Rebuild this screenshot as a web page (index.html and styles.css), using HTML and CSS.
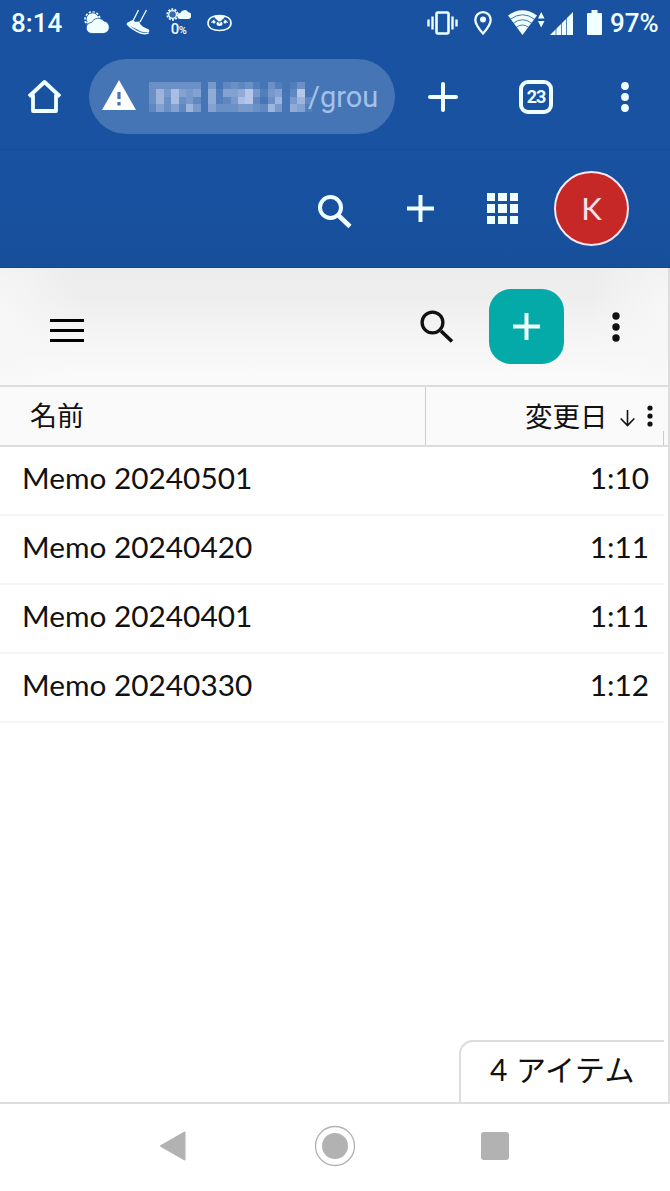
FILE: index.html
```html
<!DOCTYPE html>
<html lang="ja">
<head>
    <meta charset="UTF-8">
    <meta name="viewport" content="width=device-width, initial-scale=1.0">
    <title>Memo</title>
    <link rel="stylesheet" href="styles.css">
</head>
<body>
    <div class="status-bar">
        <span class="clock">8:14</span>
        <svg class="st-weather" width="26" height="24" viewBox="0 0 26 24">
            <circle cx="8.500" cy="8.500" r="7.300" fill="none" stroke="#f0ffff" stroke-width="2" stroke-dasharray="2.300 1.500"/>
            <circle cx="8.500" cy="8.500" r="6.500" fill="#f0ffff"/>
            <path d="M3 11a6 6 0 0 1 11-6" fill="none" stroke="#1852a1" stroke-width=".8"/>
            <path d="M8 22.500a5.500 5.500 0 0 1-.5-11A7.500 7.500 0 0 1 20 10a6.300 6.300 0 0 1-.5 12.500z" fill="#f0ffff" stroke="#1852a1" stroke-width=".8"/>
        </svg>
        <svg class="st-shoe" width="24" height="26" viewBox="0 0 24 26">
            <path d="M7 12L12.500 1M14 13L20.500 1" fill="none" stroke="#f0ffff" stroke-width="1.300"/>
            <path d="M.8 14L6.500 11c1.500 1.800 4 2.300 6.800 1.200.5 3.800 3.500 5.800 8.700 7.800 1.500.8 1.700 2 1 3-3.500.8-7.500.2-10.500-1.800C8 18.500 3.500 17.500.8 14z" fill="#f0ffff"/>
            <path d="M1 14.500c2.500 4 7 6 10.500 8.200 3 2 7.500 2.300 11.200 1.300" fill="none" stroke="#f0ffff" stroke-width="1.500"/>
        </svg>
        <div class="rain">
            <svg width="25" height="13" viewBox="0 0 25 13">
                <circle cx="6.500" cy="6.500" r="5.300" fill="none" stroke="#f0ffff" stroke-width="1.700" stroke-dasharray="2 1.300"/>
                <circle cx="6.500" cy="6.500" r="3.900" fill="#3a6bb0" stroke="#f0ffff" stroke-width="1.300"/>
                <path d="M14.500 11a3 3 0 0 1-.2-6 4.500 4.500 0 0 1 8-.8 3.400 3.400 0 0 1-.8 6.800z" fill="#f0ffff"/>
            </svg>
            <span>0<small>%</small></span>
        </div>
        <svg class="st-face" width="25" height="18" viewBox="0 0 25 18">
            <path d="M12.500 1.500C19 1.500 24 4 24 9s-5 7.500-11.500 7.500S1 14 1 9s5-7.500 11.500-7.500z" fill="none" stroke="#f0ffff" stroke-width="1.600"/>
            <path d="M7 2.500c3.500-1.300 7.500-1.300 11 0-1 2.200-3 3-4 4.500h-3C10 5.500 8 4.700 7 2.500z" fill="#f0ffff"/>
            <path d="M4.500 9q.5-2.500 3-3M20.500 9q-.5-2.500-3-3" fill="none" stroke="#f0ffff" stroke-width="1"/>
            <circle cx="7" cy="8" r="1.500" fill="#f0ffff"/>
            <circle cx="18" cy="8" r="1.500" fill="#f0ffff"/>
            <ellipse cx="12.500" cy="9.800" rx="3" ry="2.200" fill="#f0ffff"/>
            <path d="M11 8.200h3l-1.500 1.500z" fill="#1852a1"/>
        </svg>
        <svg class="st-vibrate" width="31" height="24" viewBox="0 0 31 24">
            <rect x="9.500" y="1.500" width="12" height="21" rx="1.500" fill="none" stroke="#f0ffff" stroke-width="2.600"/>
            <path d="M5.500 5.500v13M1.500 8.500v7M25.500 5.500v13M29.500 8.500v7" stroke="#f0ffff" stroke-width="2.400"/>
        </svg>
        <svg class="st-pin" width="18" height="24" viewBox="0 0 18 24">
            <path d="M9 1.200c-4.300 0-7.700 3.300-7.700 7.500C1.300 14 9 22.500 9 22.500s7.700-8.500 7.700-13.800C16.700 4.500 13.300 1.200 9 1.200z" fill="none" stroke="#f0ffff" stroke-width="2.300"/>
            <circle cx="9" cy="8.500" r="3" fill="#f0ffff"/>
        </svg>
        <svg class="st-wifi" width="37" height="25" viewBox="0 0 37 25">
            <path d="M0 5.500Q14.500-5 29 5.500L14.500 25z" fill="#f0ffff"/>
            <path d="M2 9.500q12.500-9.500 25 0M5 13.500q9.500-7.500 19 0M8 17.500q6.500-5 13 0" fill="none" stroke="#1852a1" stroke-width=".8"/>
            <path d="M30 8.500L33.200 2l3.300 6.500zM30 11l3.200 6.500L36.500 11z" fill="#f0ffff"/>
        </svg>
        <svg class="st-signal" width="23" height="23" viewBox="0 0 23 23">
            <path d="M0 23L23 0v23z" fill="#f0ffff"/>
            <path d="M6 16v7M11.500 10v13M16.500 5v18" stroke="#1852a1" stroke-width=".7"/>
        </svg>
        <svg class="st-battery" width="15" height="25" viewBox="0 0 15 25">
            <path d="M4.500 0h6v3h3.500q1 0 1 1v20q0 1-1 1H1q-1 0-1-1V4q0-1 1-1h3.500z" fill="#f0ffff"/>
        </svg>
        <span class="percent">97%</span>
    </div>

    <div class="browser-bar">
        <svg class="home" width="35" height="35" viewBox="0 0 35 35">
            <path d="M2 17.500L17.500 3 33 17.500M6 15.500v16.500h23V15.500" fill="none" stroke="#f0ffff" stroke-width="3.800" stroke-linejoin="round"/>
        </svg>
        <div class="url">
            <svg width="34" height="30" viewBox="0 0 34 30">
                <path d="M17 0l17 30H0z" fill="#fff"/>
                <path d="M17 12v7M17 22v3.500" stroke="#4675b6" stroke-width="3.200"/>
            </svg>
            <div class="mosaic" id="mosaic"></div>
            <span>/grou</span>
        </div>
        <svg class="new-tab" width="30" height="30" viewBox="0 0 30 30">
            <path d="M15 2v26M2 15h26" stroke="#f0ffff" stroke-width="4" stroke-linecap="round"/>
        </svg>
        <div class="tabs">23</div>
        <svg class="browser-menu" width="8" height="32" viewBox="0 0 8 32">
            <g fill="#f0ffff"><circle cx="4" cy="5" r="3.900"/><circle cx="4" cy="16" r="3.900"/><circle cx="4" cy="27" r="3.900"/></g>
        </svg>
    </div>

    <header class="app-header">
        <svg class="h-search" width="34" height="34" viewBox="0 0 34 34">
            <circle cx="12.500" cy="12.500" r="10.500" fill="none" stroke="#f0ffff" stroke-width="4"/>
            <path d="M20.500 20.500l11.500 11" stroke="#f0ffff" stroke-width="4.500"/>
        </svg>
        <svg class="h-plus" width="27" height="27" viewBox="0 0 27 27">
            <path d="M13.500 0v27M0 13.500h27" stroke="#f0ffff" stroke-width="4"/>
        </svg>
        <div class="apps"><i></i><i></i><i></i><i></i><i></i><i></i><i></i><i></i><i></i></div>
        <div class="avatar">K</div>
    </header>

    <main>
        <div class="toolbar">
            <div class="burger"><i></i><i></i><i></i></div>
            <svg class="t-search" width="34" height="34" viewBox="0 0 34 34">
                <circle cx="12.500" cy="12.500" r="10.400" fill="none" stroke="#111" stroke-width="3.300"/>
                <path d="M21 21l11 10.500" stroke="#111" stroke-width="3.800"/>
            </svg>
            <div class="add-btn">
                <svg width="27" height="27" viewBox="0 0 27 27">
                    <path d="M13.500 0v27M0 13.500h27" stroke="#f0ffff" stroke-width="4"/>
                </svg>
            </div>
            <svg class="t-menu" width="8" height="32" viewBox="0 0 8 32">
                <g fill="#111"><circle cx="4" cy="5" r="3.700"/><circle cx="4" cy="16" r="3.700"/><circle cx="4" cy="27" r="3.700"/></g>
            </svg>
        </div>

        <div class="list-head">
            <div class="col-name">名前</div>
            <div class="col-date">
                <span>変更日</span>
                <svg class="arrow" width="15" height="17" viewBox="0 0 15 17">
                    <path d="M7.500 0v15.500M.7 8.500l6.800 7 6.800-7" fill="none" stroke="#111" stroke-width="1.600"/>
                </svg>
                <svg class="col-menu" width="6" height="22" viewBox="0 0 6 22">
                    <g fill="#111"><circle cx="3" cy="3" r="2.600"/><circle cx="3" cy="11" r="2.600"/><circle cx="3" cy="19" r="2.600"/></g>
                </svg>
            </div>
            <div class="grip"></div>
        </div>

        <div class="list">
            <div class="row"><span>Memo 20240501</span><span>1:10</span></div>
            <div class="row"><span>Memo 20240420</span><span>1:11</span></div>
            <div class="row"><span>Memo 20240401</span><span>1:11</span></div>
            <div class="row"><span>Memo 20240330</span><span>1:12</span></div>
        </div>

        <div class="count">4 アイテム</div>
    </main>

    <div class="nav-bar">
        <svg width="28" height="32" viewBox="0 0 28 32">
            <path d="M25.500 2.500v27L2 16z" fill="#b2b2b2" stroke="#b2b2b2" stroke-width="2" stroke-linejoin="round"/>
        </svg>
        <svg class="nav-home" width="42" height="42" viewBox="0 0 42 42">
            <circle cx="21" cy="21" r="19.500" fill="none" stroke="#b2b2b2" stroke-width="1.300"/>
            <circle cx="21" cy="21" r="13" fill="#b2b2b2"/>
        </svg>
        <div class="recent"></div>
    </div>

    <script>
        // opacity level (0-9) of every mosaic cell
        const levels = [
            '3333333040232310310130',
            '3748545061556941450290',
            '3738342061248920370472',
            '2535274053334432740651'
        ];
        const mosaic = document.getElementById('mosaic');
        for (const level of levels.join('')) {
            const cell = document.createElement('i');
            cell.style.opacity = level / 12;
            mosaic.appendChild(cell);
        }
    </script>
</body>
</html>
```
FILE: styles.css
```css
* {
    box-sizing: border-box;
}

body {
    margin: 0;
    height: 1191px;
    display: flex;
    flex-direction: column;
    overflow: hidden;
    background: #fff;
    color: #111;
    font-family: Lato, "Noto Sans CJK JP", sans-serif;
}

svg {
    display: block;
    flex: none;
}

.status-bar {
    height: 46px;
    padding-left: 11px;
    display: flex;
    align-items: center;
    background: #1852a1;
    color: #f0ffff;
    font-family: Roboto, sans-serif;
    font-size: 26px;
    font-weight: 500;
}

.clock {
    width: 73px;
}

.st-shoe {
    margin-left: 16px;
    margin-top: -2px;
}

.rain {
    width: 25px;
    margin-left: 16px;
    text-align: center;
    font-size: 15px;
    line-height: 14px;
    letter-spacing: -0.5px;
}

.rain span {
    display: block;
    margin-top: 1px;
}

.rain small {
    font-size: 11px;
}

.st-face {
    margin-left: 16px;
}

.st-vibrate {
    margin-left: 195px;
}

.st-pin {
    margin-left: 16px;
}

.st-wifi {
    margin-left: 16px;
    margin-top: -2px;
}

.st-signal {
    margin-left: 5px;
}

.st-battery {
    margin-left: 14px;
    margin-top: -1px;
}

.percent {
    margin-left: 8px;
}

.browser-bar {
    height: 104px;
    padding: 0 0 2px 27px;
    display: flex;
    align-items: center;
    background: #1852a1;
    border-bottom: 1px solid #164a93;
}

.url {
    width: 306px;
    height: 75px;
    margin-left: 27px;
    padding-left: 13px;
    display: flex;
    align-items: center;
    border-radius: 38px;
    background: #4675b6;
    color: #a3c1e9;
    font-family: Roboto, sans-serif;
    font-size: 29px;
}

.url svg {
    margin-top: -4px;
}

.mosaic {
    width: 163px;
    height: 30px;
    margin-left: 13px;
    margin-right: -4px;
    display: grid;
    grid-template-columns: repeat(22, 1fr);
    grid-template-rows: repeat(4, 1fr);
}

.mosaic i {
    background: #dbe2f8;
}

.new-tab {
    margin-left: 33px;
}

.tabs {
    width: 34px;
    height: 34px;
    margin-left: 61px;
    border: 4px solid #f0ffff;
    border-radius: 9px;
    color: #f0ffff;
    font: 700 18px/25px Roboto, sans-serif;
    letter-spacing: -1px;
    text-align: center;
}

.browser-menu {
    margin-left: 68px;
}

.app-header {
    height: 118px;
    padding-left: 318px;
    display: flex;
    align-items: center;
    background: linear-gradient(#1852a1, #174f9b);
    border-bottom: 1px solid #164683;
}

.h-search {
    margin-top: 7px;
}

.h-plus {
    margin-left: 55px;
}

.apps {
    width: 31px;
    height: 31px;
    margin-left: 53px;
    display: grid;
    grid-template-columns: repeat(3, 1fr);
    gap: 3px;
}

.apps i {
    background: #f0ffff;
}

.avatar {
    width: 75px;
    height: 75px;
    margin-left: 36px;
    border: 2px solid #fbe9f2;
    border-radius: 50%;
    background: #c62828;
    color: #fbe3ea;
    font-size: 31px;
    line-height: 70px;
    text-align: center;
}

main {
    height: 836px;
    display: flex;
    flex-direction: column;
    border-right: 2px solid #ddd;
    border-bottom: 2px solid #ddd;
}

.toolbar {
    height: 119px;
    padding-left: 50px;
    display: flex;
    align-items: center;
    background: radial-gradient(ellipse 12% 90% at 0 40%, #f7f7f7, transparent),
        radial-gradient(ellipse 12% 90% at 100% 40%, #f7f7f7, transparent),
        linear-gradient(#ececec, #eee 25%, #f5f5f5 60%, #fafafa 95%);
    border-bottom: 2px solid #dcdcdc;
}

.burger {
    width: 34px;
    height: 23px;
    margin-top: 7px;
    display: flex;
    flex-direction: column;
    justify-content: space-between;
}

.burger i {
    height: 3px;
    background: #000;
}

.t-search {
    margin-left: 336px;
}

.add-btn {
    width: 75px;
    height: 75px;
    margin-left: 35px;
    display: flex;
    align-items: center;
    justify-content: center;
    border-radius: 22px;
    background: #03aaa7;
}

.t-menu {
    margin-left: 48px;
}

.list-head {
    height: 60px;
    display: flex;
    background: #fafafa;
    border-bottom: 2px solid #dcdcdc;
    font-size: 27px;
    line-height: 57px;
}

.col-name {
    width: 426px;
    padding-left: 30px;
    border-right: 1px solid #ccc;
}

.col-date {
    width: 237px;
    padding-left: 99px;
    display: flex;
    align-items: center;
}

.col-date span {
    width: 82px;
    font-size: 27.5px;
    white-space: nowrap;
}

.arrow {
    margin-left: 13px;
    margin-top: 4px;
}

.col-menu {
    margin-left: 12px;
}

.grip {
    width: 1px;
    height: 14px;
    align-self: flex-end;
    background: #ccc;
}

.list {
    flex: 1;
    width: 664px;
}

.row {
    height: 69px;
    padding: 0 15px 7px 22px;
    display: flex;
    align-items: center;
    justify-content: space-between;
    border-bottom: 2px solid #f5f5f5;
    font-size: 29.8px;
}

.count {
    width: 205px;
    height: 62px;
    margin-left: 459px;
    padding-left: 29px;
    border: 2px solid #ddd;
    border-right: none;
    border-bottom: none;
    border-top-left-radius: 14px;
    font-size: 30px;
    letter-spacing: 0.5px;
    line-height: 55px;
    white-space: nowrap;
}

.nav-bar {
    height: 87px;
    padding: 0 0 3px 159px;
    display: flex;
    align-items: center;
}

.nav-home {
    margin-left: 127px;
}

.recent {
    width: 28px;
    height: 28px;
    margin-left: 125px;
    border-radius: 3px;
    background: #b2b2b2;
}
```
